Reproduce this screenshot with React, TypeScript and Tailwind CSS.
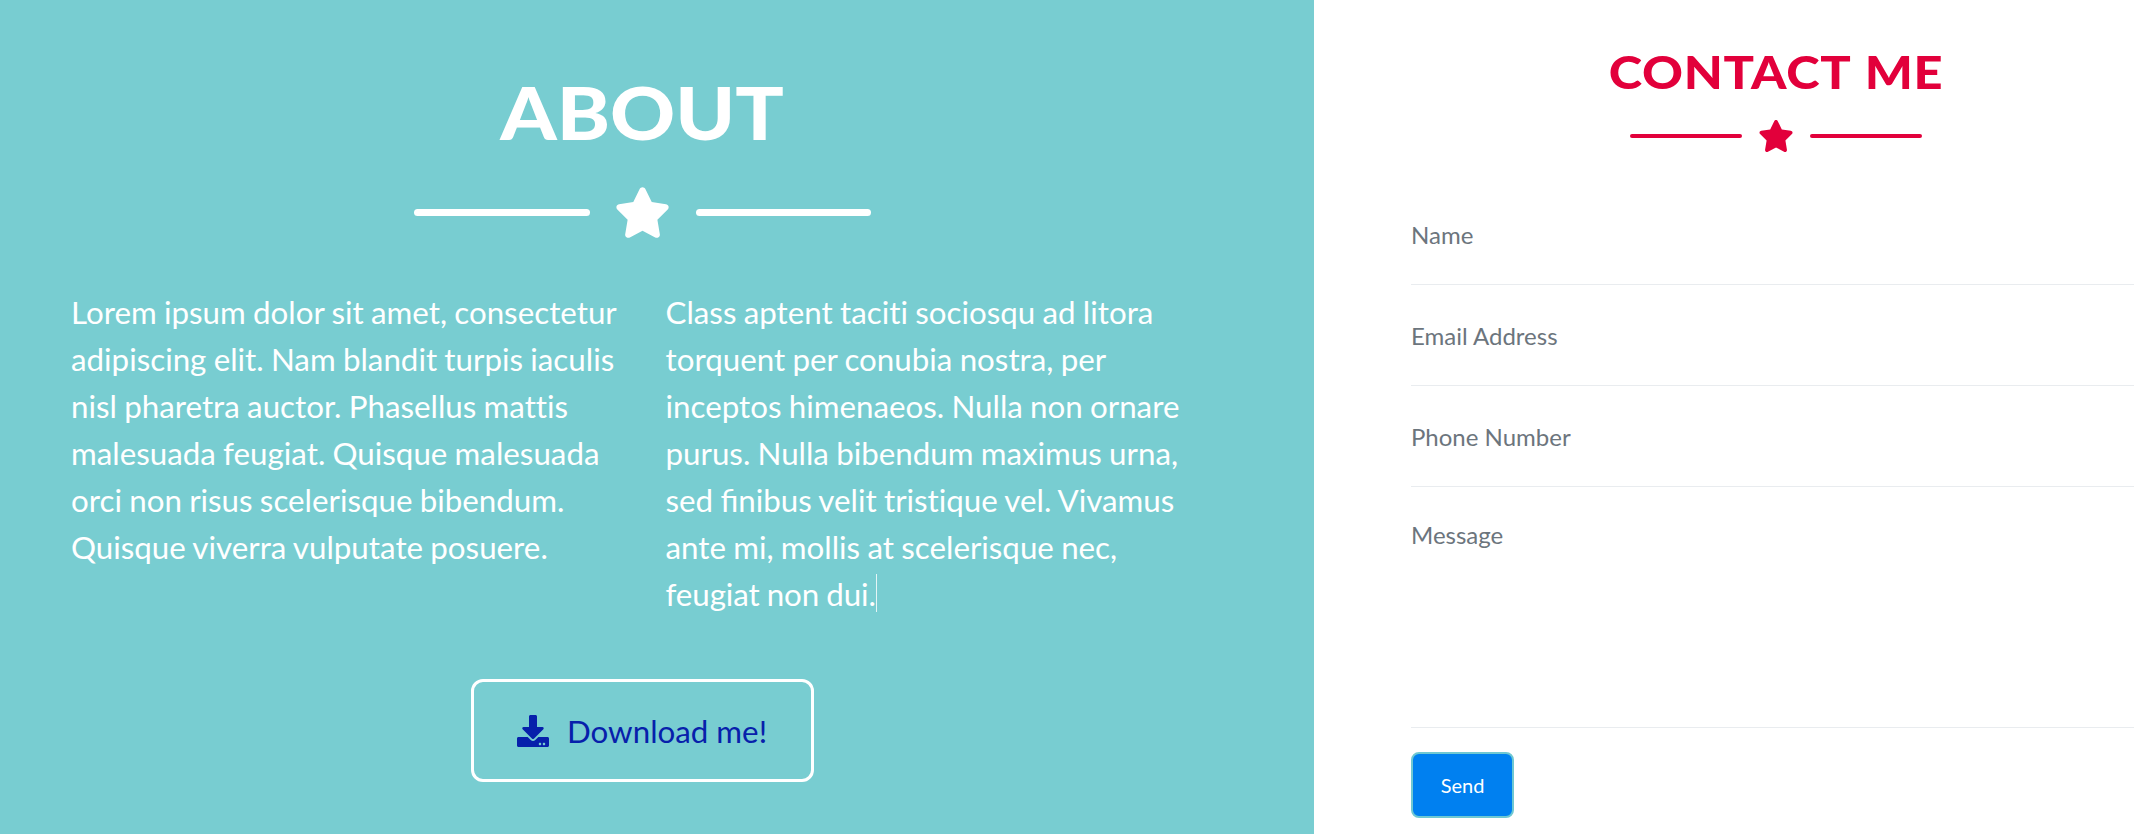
import { FaDownload } from "react-icons/fa";
import { FaStar } from "react-icons/fa6";

const FIELDS = ["Name", "Email Address", "Phone Number"];

function Divider({ large = false }: { large?: boolean }) {
  const line = large
    ? "h-[6.4px] w-[175.6px] rounded-full bg-current"
    : "h-1 w-28 rounded-full bg-current";
  return (
    <div className={large ? "flex items-center justify-center gap-[24.5px]" : "flex items-center justify-center gap-4"}>
      <span className={line} />
      <FaStar className={large ? "h-[51px] w-[57px]" : "h-8 w-9"} />
      <span className={line} />
    </div>
  );
}

function About() {
  return (
    <section className="flex w-[1314px] shrink-0 flex-col bg-[#78cdd1] text-white">
      <div className="flex w-[1285px] flex-col items-center">
        <h2 className="mt-[68px] h-[88px] origin-center scale-x-[1.125] text-[71.5px] leading-[88px] font-black">
          ABOUT
        </h2>
        <div className="mt-[31px]">
          <Divider large />
        </div>
      </div>
      <div className="mt-[51px] flex pl-[71px] text-[31.3px] leading-[47px] [font-variant-ligatures:none] [word-spacing:-0.75px]">
        <p className="w-[594.5px] whitespace-nowrap">
          Lorem ipsum dolor sit amet, consectetur
          <br />
          adipiscing elit. Nam blandit turpis iaculis
          <br />
          nisl pharetra auctor. Phasellus mattis
          <br />
          malesuada feugiat. Quisque malesuada
          <br />
          orci non risus scelerisque bibendum.
          <br />
          Quisque viverra vulputate posuere.
        </p>
        <p className="whitespace-nowrap">
          Class aptent taciti sociosqu ad litora
          <br />
          torquent per conubia nostra, per
          <br />
          inceptos himenaeos. Nulla non ornare
          <br />
          purus. Nulla bibendum maximus urna,
          <br />
          sed <span className="[font-variant-ligatures:normal]">finibus</span> velit tristique vel. Vivamus
          <br />
          ante mi, mollis at scelerisque nec,
          <br />
          <span className="tracking-[-0.1px]">feugiat non dui.</span>
          <span className="inline-block h-[38px] w-[1.5px] bg-white/80 align-[-6px]" />
        </p>
      </div>
      <div className="mt-[61px] flex w-[1285px] justify-center">
        <button className="flex h-[103px] w-[343px] items-center rounded-[12px] border-[3px] border-white pl-[43px] text-[31.3px] text-[#0720ab]">
          <FaDownload className="h-8 w-8" />
          <span className="ml-[18px] pt-0.5 whitespace-nowrap">Download me!</span>
        </button>
      </div>
    </section>
  );
}

function Contact() {
  return (
    <section className="flex min-w-0 flex-1 flex-col bg-white">
      <div className="flex w-[924px] flex-col items-center text-[#e2003b]">
        <h2 className="mt-[44px] h-[56px] origin-center scale-x-[1.1] text-[46px] leading-[56px] font-black tracking-[0.6px] whitespace-nowrap [word-spacing:2px]">
          CONTACT ME
        </h2>
        <div className="mt-[20px]">
          <Divider />
        </div>
      </div>
      <form className="mt-[32px] ml-[97px] text-2xl text-[#6c757d]">
        {FIELDS.map((label) => (
          <div key={label} className="flex h-[101px] items-center border-b border-[#e9ecef]">
            <span className="pt-px">{label}</span>
          </div>
        ))}
        <div className="h-[241px] border-b border-[#e9ecef] pt-8">Message</div>
        <button className="mt-6 block h-[66px] w-[103px] rounded-lg border-2 border-[#6fc8d2] bg-[#0080f0] text-xl text-white">
          Send
        </button>
      </form>
    </section>
  );
}

export default function App() {
  return (
    <main className="flex h-[834px] w-[2134px] overflow-hidden font-['Lato',sans-serif]">
      <About />
      <Contact />
    </main>
  );
}
